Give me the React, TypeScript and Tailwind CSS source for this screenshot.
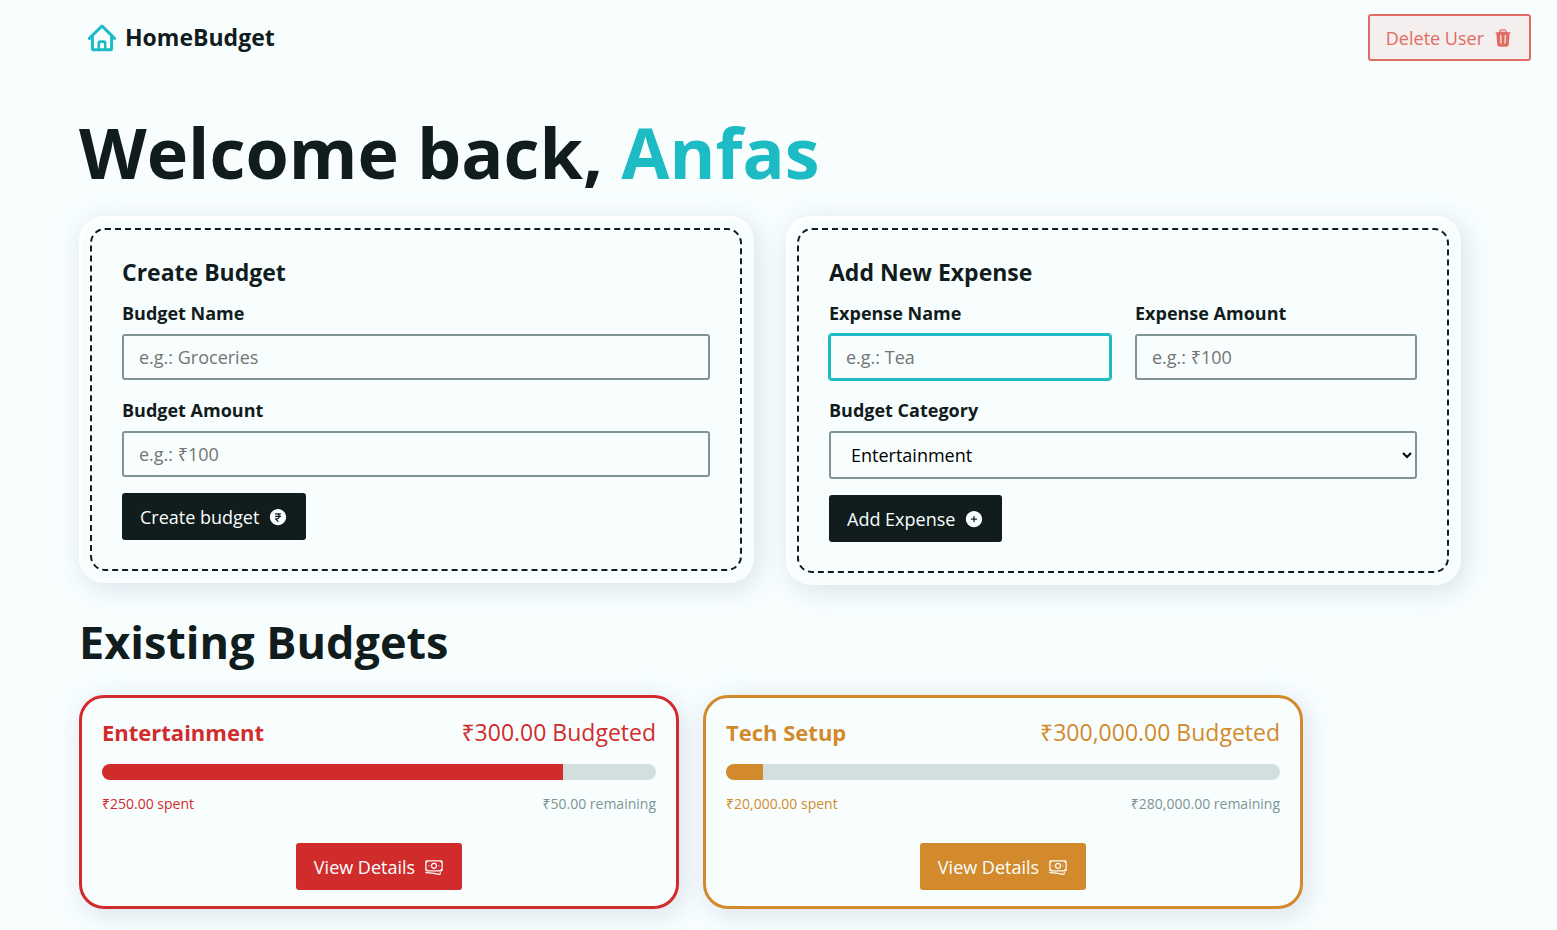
import type { ReactNode } from "react";
import { HiTrash, HiOutlineBanknotes, HiCurrencyRupee, HiPlusCircle } from "react-icons/hi2";

const label = "text-lg font-bold leading-6";
const field =
  "mt-2 block h-[46px] w-full min-w-0 rounded-[3px] border-2 border-[#7f9493] bg-transparent px-[15px] text-lg placeholder:text-[#757575] outline-none";
const darkButton =
  "flex h-[47px] items-center gap-[9px] rounded-[3px] bg-[#111c1c] px-[18px] text-lg text-[#f8fefe]";

function Logo() {
  return (
    <svg className="size-[30px]" viewBox="0 0 30 30" fill="none" stroke="#1dbbc3" strokeWidth="3" strokeLinecap="round" strokeLinejoin="round" aria-hidden="true">
      <path d="M2.4 15.4 L15 3 L27.6 15.4" />
      <path d="M5.4 13 V25.4 Q5.4 26.8 6.8 26.8 H23.2 Q24.6 26.8 24.6 25.4 V13" />
      <path d="M11.8 26.5 V19.8 Q11.8 18.6 13 18.6 H17 Q18.2 18.6 18.2 19.8 V26.5" strokeWidth="2.6" />
    </svg>
  );
}

function FormCard({ title, children }: { title: string; children: ReactNode }) {
  return (
    <div className="rounded-[25px] bg-[#f8fefe] py-3 pr-3 pl-[11px] shadow-[inset_3px_3px_0_0_#ffffff,0_0_24px_0_rgba(190,200,235,0.22),6px_8px_24px_0_rgba(120,125,140,0.14)]">
      <form className="rounded-[15px] border-2 border-dashed border-[#111c1c] px-[30px] pt-[26px] pb-[29px]" onSubmit={(e) => e.preventDefault()}>
        <h2 className="text-[23px] leading-8 font-bold">{title}</h2>
        {children}
      </form>
    </div>
  );
}

type Budget = {
  name: string;
  total: string;
  spent: string;
  left: string;
  percent: number;
  text: string;
  fill: string;
  border: string;
};

const budgets: Budget[] = [
  { name: "Entertainment", total: "₹300.00", spent: "₹250.00", left: "₹50.00", percent: 83.3, text: "text-[#d12c2c]", fill: "bg-[#d12c2c]", border: "border-[#d12c2c]" },
  { name: "Tech Setup", total: "₹300,000.00", spent: "₹20,000.00", left: "₹280,000.00", percent: 6.6, text: "text-[#d28a2c]", fill: "bg-[#d28a2c]", border: "border-[#d28a2c]" },
];

function BudgetCard({ b }: { b: Budget }) {
  return (
    <article className={`w-[600px] max-w-full rounded-[25px] border-[3px] bg-[#f8fefe] px-5 py-4 shadow-[0_0_24px_0_rgba(190,200,235,0.22),6px_8px_24px_0_rgba(120,125,140,0.14)] ${b.border} ${b.text}`}>
      <div className="flex items-center justify-between leading-9">
        <h3 className="text-[22px] leading-9 font-bold">{b.name}</h3>
        <p className="text-[23px] leading-9">{b.total} Budgeted</p>
      </div>
      <div role="progressbar" aria-label={b.name} aria-valuenow={b.percent} aria-valuemin={0} aria-valuemax={100} className="mt-3.5 h-4 overflow-hidden rounded-full bg-[#d3dede]">
        <div className={`h-full ${b.fill}`} style={{ width: `${b.percent}%` }} />
      </div>
      <div className="mt-3 flex justify-between text-sm leading-6">
        <span>{b.spent} spent</span>
        <span className="text-[#7f9493]">{b.left} remaining</span>
      </div>
      <div className="mt-[27px] flex justify-center">
        <a href="#details" className={`flex h-[47px] items-center gap-[9px] rounded-[3px] px-[18px] text-lg text-[#f8fefe] ${b.fill}`}>
          <span>View Details</span>
          <HiOutlineBanknotes size={20} aria-hidden="true" />
        </a>
      </div>
    </article>
  );
}

export default function App() {
  return (
    <div className="min-h-screen bg-[#f8fefe] pb-[21px] font-['Open_Sans','Noto_Sans',sans-serif] text-[#111c1c]">
      <nav className="flex items-center justify-between pt-3.5 pr-[26px] pl-[87px]">
        <a href="#home" className="flex items-center gap-2 text-[23px] font-bold">
          <Logo />
          <span>HomeBudget</span>
        </a>
        <button className="flex h-[47px] items-center gap-[9px] rounded-[3px] border-2 border-[#e06c64] bg-[#f4eeee] px-4 text-lg text-[#e06c64]">
          <span>Delete User</span>
          <HiTrash size={20} aria-hidden="true" />
        </button>
      </nav>
      <main className="pt-[51px] pr-24 pl-[79px]">
        <h1 className="text-[70px] leading-20 font-bold">
          Welcome back, <span className="text-[#1dbbc3]">Anfas</span>
        </h1>
        <div className="mt-6 grid grid-cols-2 items-start gap-8">
          <FormCard title="Create Budget">
            <div className="mt-[13px]">
              <label htmlFor="budget" className={label}>Budget Name</label>
              <input id="budget" className={field} placeholder="e.g.: Groceries" />
            </div>
            <div className="mt-[18px]">
              <label htmlFor="amount" className={label}>Budget Amount</label>
              <input id="amount" className={field} placeholder="e.g.: ₹100" />
            </div>
            <button className={`mt-4 ${darkButton}`}>
              <span>Create budget</span>
              <HiCurrencyRupee size={20} aria-hidden="true" />
            </button>
          </FormCard>
          <FormCard title="Add New Expense">
            <div className="mt-[13px] grid grid-cols-2 gap-6">
              <div>
                <label htmlFor="expense" className={label}>Expense Name</label>
                <input id="expense" className={`${field} border-[#1dbbc3]! ring-1 ring-[#1dbbc3]`} placeholder="e.g.: Tea" />
              </div>
              <div>
                <label htmlFor="expense-amount" className={label}>Expense Amount</label>
                <input id="expense-amount" className={field} placeholder="e.g.: ₹100" />
              </div>
            </div>
            <div className="mt-[18px]">
              <label htmlFor="category" className={label}>Budget Category</label>
              <select id="category" className="mt-2 block h-12 w-full rounded-[3px] border-2 border-[#7f9493] bg-transparent pl-4 text-lg text-black">
                <option>Entertainment</option>
                <option>Tech Setup</option>
              </select>
            </div>
            <button className={`mt-4 ${darkButton}`}>
              <span>Add Expense</span>
              <HiPlusCircle size={20} aria-hidden="true" />
            </button>
          </FormCard>
        </div>
        <h2 className="mt-[27px] text-[45px] leading-15 font-bold">Existing Budgets</h2>
        <div className="mt-[23px] flex flex-wrap gap-6">
          {budgets.map((b) => (
            <BudgetCard key={b.name} b={b} />
          ))}
        </div>
      </main>
    </div>
  );
}
